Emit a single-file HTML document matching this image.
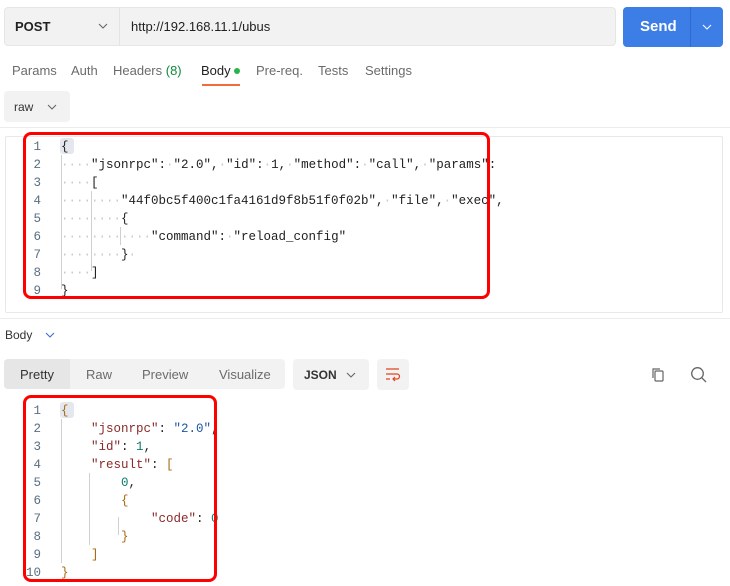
<!DOCTYPE html>
<html><head><meta charset="utf-8"><style>
*{margin:0;padding:0;box-sizing:border-box}
body{width:730px;height:586px;background:#fff;font-family:"Liberation Sans",sans-serif;position:relative;overflow:hidden;color:#212121}
.a{position:absolute}
.mono{font-family:"Liberation Mono",monospace;font-size:12.5px}
.mono>div{display:flex;white-space:pre;height:18px}
.ln{color:#5a6f80;text-align:right;width:19px}
.c{margin-left:20px}
.k{color:#8b2a2a}.s{color:#1f57a3}.n{color:#0d7a6a}.b{color:#a86a12}
.dot{color:#c8c8c8}
</style></head><body>
<div class="a" style="left:4px;top:7px;width:612px;height:39px;background:#f2f2f2;border:1px solid #e6e6e6;border-radius:4px"></div>
<div class="a" style="left:119px;top:8px;width:1px;height:37px;background:#e3e3e3"></div>
<div class="a" style="left:15px;top:19px;font-size:13px;font-weight:bold;color:#212121">POST</div>
<svg class="a" style="left:98px;top:22px" width="10" height="8"><path d="M1 2l4 4 4-4" fill="none" stroke="#666" stroke-width="1.1"/></svg>
<div class="a" style="left:131px;top:19px;font-size:13px;color:#212121">http://192.168.11.1/ubus</div>
<div class="a" style="left:623px;top:7px;width:100px;height:40px;background:#3c7de6;border-radius:4px"></div>
<div class="a" style="left:690px;top:7px;width:1px;height:40px;background:#2f6ad0"></div>
<div class="a" style="left:640px;top:18px;font-size:15px;font-weight:bold;color:#fff">Send</div>
<svg class="a" style="left:702px;top:23px" width="10" height="8"><path d="M1 2l4 4 4-4" fill="none" stroke="#fff" stroke-width="1.1"/></svg>
<div class="a" style="top:63px;left:12px;font-size:13px;color:#6b6b6b">Params</div>
<div class="a" style="top:63px;left:71px;font-size:13px;color:#6b6b6b">Auth</div>
<div class="a" style="top:63px;left:113px;font-size:13px;color:#6b6b6b">Headers <span style="color:#0d8a3a">(8)</span></div>
<div class="a" style="top:63px;left:201px;font-size:13px;color:#212121">Body</div>
<div class="a" style="left:234px;top:68px;width:6px;height:6px;border-radius:50%;background:#27b44a"></div>
<div class="a" style="left:202px;top:84px;width:38px;height:2px;background:#f26b3a"></div>
<div class="a" style="top:63px;left:256px;font-size:13px;color:#6b6b6b">Pre-req.</div>
<div class="a" style="top:63px;left:318px;font-size:13px;color:#6b6b6b">Tests</div>
<div class="a" style="top:63px;left:365px;font-size:13px;color:#6b6b6b">Settings</div>
<div class="a" style="left:4px;top:91px;width:66px;height:31px;background:#f2f2f2;border-radius:4px"></div>
<div class="a" style="left:14px;top:100px;font-size:12px;color:#333">raw</div>
<svg class="a" style="left:47px;top:103px" width="10" height="8"><path d="M1 2l4 4 4-4" fill="none" stroke="#666" stroke-width="1.1"/></svg>
<div class="a" style="left:0;top:127px;width:730px;height:1px;background:#ececec"></div>
<div class="a" style="left:5px;top:136px;width:718px;height:177px;border:1px solid #e8e8e8;border-radius:2px"></div>
<div class="a" style="left:60px;top:138px;width:14px;height:16px;background:#e4e8ee;border-radius:3px"></div>
<div class="a" style="left:61px;top:155px;width:1px;height:134px;background:#d0d0d0"></div>
<div class="a" style="left:91px;top:191px;width:1px;height:80px;background:#d0d0d0"></div>
<div class="a" style="left:120px;top:227px;width:1px;height:18px;background:#d0d0d0"></div>
<div class="a mono" style="left:22px;top:138px;line-height:18px"><div><span class="ln">1</span><span class="c">{</span></div><div><span class="ln">2</span><span class="c"><span class="dot">····</span>"jsonrpc":<span class="dot">·</span>"2.0",<span class="dot">·</span>"id":<span class="dot">·</span>1,<span class="dot">·</span>"method":<span class="dot">·</span>"call",<span class="dot">·</span>"params":</span></div><div><span class="ln">3</span><span class="c"><span class="dot">····</span>[</span></div><div><span class="ln">4</span><span class="c"><span class="dot">········</span>"44f0bc5f400c1fa4161d9f8b51f0f02b",<span class="dot">·</span>"file",<span class="dot">·</span>"exec",</span></div><div><span class="ln">5</span><span class="c"><span class="dot">········</span>{</span></div><div><span class="ln">6</span><span class="c"><span class="dot">············</span>"command":<span class="dot">·</span>"reload_config"</span></div><div><span class="ln">7</span><span class="c"><span class="dot">········</span>}<span class="dot">·</span></span></div><div><span class="ln">8</span><span class="c"><span class="dot">····</span>]</span></div><div><span class="ln">9</span><span class="c">}</span></div></div>
<div class="a" style="left:23px;top:132px;width:467px;height:167px;border:3px solid #f00;border-radius:8px"></div>
<div class="a" style="left:0;top:318px;width:730px;height:1px;background:#ececec"></div>
<div class="a" style="left:5px;top:328px;font-size:12px;color:#333">Body</div>
<svg class="a" style="left:45px;top:331px" width="10" height="8"><path d="M1 2l4 4 4-4" fill="none" stroke="#3c6ed6" stroke-width="1.1"/></svg>
<div class="a" style="left:4px;top:359px;width:281px;height:30px;background:#f2f2f2;border-radius:4px"></div>
<div class="a" style="left:4px;top:359px;width:66px;height:30px;background:#e6e6e6;border-radius:4px 0 0 4px"></div>
<div class="a" style="left:20px;top:367px;font-size:13px;color:#333">Pretty</div>
<div class="a" style="left:86px;top:367px;font-size:13px;color:#6b6b6b">Raw</div>
<div class="a" style="left:142px;top:367px;font-size:13px;color:#6b6b6b">Preview</div>
<div class="a" style="left:219px;top:367px;font-size:13px;color:#6b6b6b">Visualize</div>
<div class="a" style="left:293px;top:359px;width:76px;height:31px;background:#f2f2f2;border-radius:4px"></div>
<div class="a" style="left:304px;top:368px;font-size:12px;font-weight:bold;color:#333">JSON</div>
<svg class="a" style="left:346px;top:371px" width="10" height="8"><path d="M1 2l4 4 4-4" fill="none" stroke="#666" stroke-width="1.1"/></svg>
<div class="a" style="left:377px;top:359px;width:32px;height:31px;background:#f2f2f2;border-radius:4px"></div>
<svg class="a" style="left:384px;top:366px" width="18" height="16"><path d="M2 3h13M2 8h11a2.5 2.5 0 0 1 0 5h-4M11 11l-2 2 2 2M2 13h4" fill="none" stroke="#e0451f" stroke-width="1.2"/></svg>
<svg class="a" style="left:650px;top:366px" width="16" height="17"><rect x="5" y="5" width="8" height="10" rx="1" fill="none" stroke="#666" stroke-width="1.2"/><path d="M3 12V3h7" fill="none" stroke="#666" stroke-width="1.2"/></svg>
<svg class="a" style="left:690px;top:366px" width="18" height="18"><circle cx="7.5" cy="7.5" r="5.8" fill="none" stroke="#666" stroke-width="1.3"/><path d="M12 12l4 4" stroke="#666" stroke-width="1.3"/></svg>
<div class="a" style="left:60px;top:402px;width:14px;height:16px;background:#e4e8ee;border-radius:3px"></div>
<div class="a" style="left:61px;top:419px;width:1px;height:144px;background:#d0d0d0"></div>
<div class="a" style="left:89px;top:473px;width:1px;height:72px;background:#d0d0d0"></div>
<div class="a" style="left:118px;top:517px;width:1px;height:18px;background:#d0d0d0"></div>
<div class="a mono" style="left:22px;top:402px;line-height:18px"><div><span class="ln">1</span><span class="c b">{</span></div><div><span class="ln">2</span><span class="c">    <span class="k">"jsonrpc"</span>: <span class="s">"2.0"</span>,</span></div><div><span class="ln">3</span><span class="c">    <span class="k">"id"</span>: <span class="n">1</span>,</span></div><div><span class="ln">4</span><span class="c">    <span class="k">"result"</span>: <span class="b">[</span></span></div><div><span class="ln">5</span><span class="c">        <span class="n">0</span>,</span></div><div><span class="ln">6</span><span class="c">        <span class="b">{</span></span></div><div><span class="ln">7</span><span class="c">            <span class="k">"code"</span>: <span class="n">0</span></span></div><div><span class="ln">8</span><span class="c">        <span class="b">}</span></span></div><div><span class="ln">9</span><span class="c">    <span class="b">]</span></span></div><div><span class="ln">10</span><span class="c b">}</span></div></div>
<div class="a" style="left:23px;top:395px;width:194px;height:187px;border:3px solid #f00;border-radius:8px"></div>
</body></html>
